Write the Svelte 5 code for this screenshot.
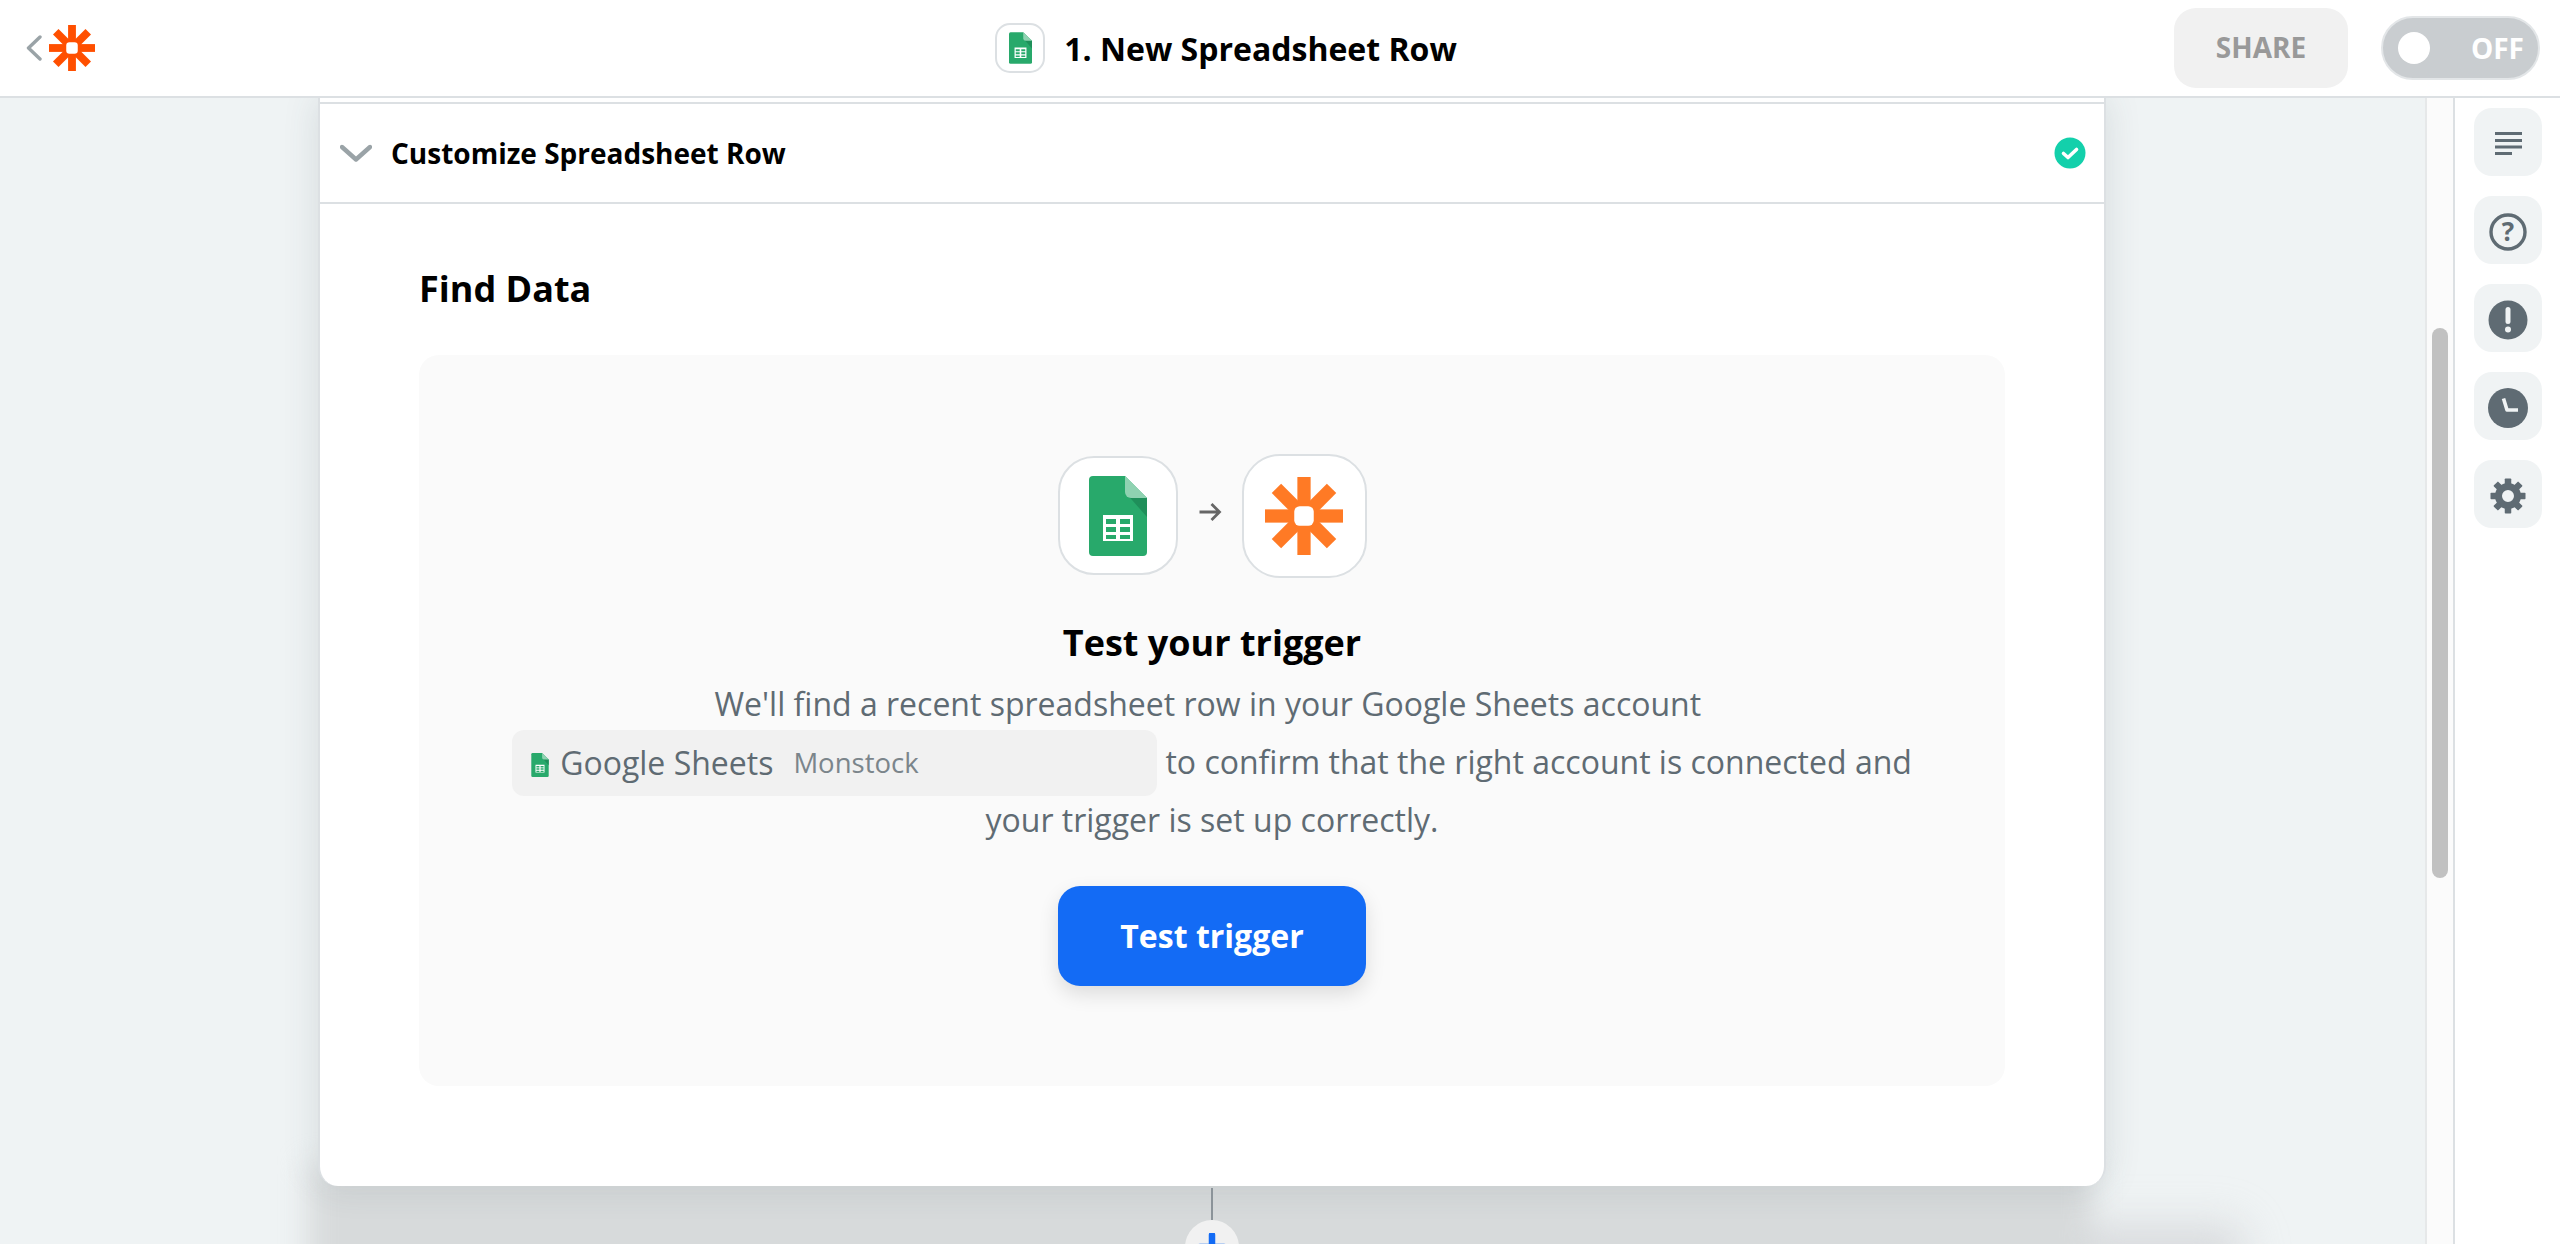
<script>
  const arms = [0, 45, 90, 135];
  const teeth = [0, 45, 90, 135, 180, 225, 270, 315];
</script>

{#snippet zap(color, cls)}
  <svg class={cls} viewBox="-50 -50 100 100" aria-hidden="true">
    {#each arms as a}
      <rect x="-8.5" y="-50" width="17" height="100" fill={color} transform="rotate({a})" />
    {/each}
    <circle r="18" fill={color} />
    <rect x="-12.5" y="-12.5" width="25" height="25" rx="7" fill="#fff" />
  </svg>
{/snippet}

{#snippet sheet(cls)}
  <svg class={cls} viewBox="0 0 58 80" aria-hidden="true">
    <path d="M4 0H36L58 22V76a4 4 0 0 1-4 4H4a4 4 0 0 1-4-4V4a4 4 0 0 1 4-4Z" fill="#28a96b" />
    <path d="M36 16L58 41V22L44 20Z" fill="#1f8f5a" />
    <path d="M36 0V16a6 6 0 0 0 6 6H58Z" fill="#8fd2b1" />
    <path fill-rule="evenodd" fill="#fff" d="M14 39H44V65H14ZM17 43V48H27V43ZM31 43V48H41V43ZM17 51V56H27V51ZM31 51V56H41V51ZM17 59V63H27V59ZM31 59V63H41V59Z" />
  </svg>
{/snippet}

<div class="app">
  <header class="topbar">
    <div class="brand">
      <svg class="back" viewBox="0 0 16 26" aria-hidden="true"><path d="M14 2L2.5 13L14 24" fill="none" stroke="#9aa3a7" stroke-width="3.4" stroke-linecap="round" stroke-linejoin="round" /></svg>
      {@render zap('#ff4f00', 'logo')}
    </div>
    <div class="title">
      <span class="title-icon">{@render sheet('sheet-sm')}</span>
      <span>1. New Spreadsheet Row</span>
    </div>
    <div class="actions">
      <button class="share">SHARE</button>
      <div class="toggle"><span class="knob"></span><span>OFF</span></div>
    </div>
  </header>

  <div class="main">
    <div class="canvas">
      <div class="after-shadow"></div>
      <section class="card">
        <div class="card-head">
          <svg class="chev" viewBox="0 0 32 18" aria-hidden="true"><path d="M2 3L16 15.5L30 3" fill="none" stroke="#9aa3a7" stroke-width="4.4" stroke-linecap="round" stroke-linejoin="round" /></svg>
          <span class="head-label">Customize Spreadsheet Row</span>
          <svg class="ok" viewBox="0 0 32 32" aria-hidden="true"><circle cx="16" cy="16" r="15.5" fill="#13d0ab" /><path d="M9.5 16.5L14 20.5L22.5 12.5" fill="none" stroke="#fff" stroke-width="3.6" stroke-linecap="round" stroke-linejoin="round" /></svg>
        </div>
        <div class="card-body">
          <h2>Find Data</h2>
          <div class="panel">
            <div class="flow">
              <div class="app-box small">{@render sheet('sheet-lg')}</div>
              <svg class="arrow" viewBox="0 0 24 20" aria-hidden="true"><path d="M1.5 10H21.5M13.5 2L21.5 10L13.5 18" fill="none" stroke="#666" stroke-width="2.8" /></svg>
              <div class="app-box big">{@render zap('#ff7a25', 'zap-lg')}</div>
            </div>
            <h3>Test your trigger</h3>
            <p>We'll find a recent spreadsheet row in your Google Sheets account&nbsp; <span class="chip">{@render sheet('sheet-xs')}<span class="chip-app">Google Sheets</span><span class="chip-acc">Monstock</span></span> to confirm that the right account is connected and your trigger is set up correctly.</p>
            <button class="test">Test trigger</button>
          </div>
        </div>
      </section>
      <div class="connector">
        <span class="line"></span>
        <span class="plus"><svg viewBox="0 0 28 28" aria-hidden="true"><path d="M14 2V26M2 14H26" stroke="#136bf5" stroke-width="6.5" stroke-linecap="round" /></svg></span>
      </div>
    </div>

    <div class="scroll"><div class="thumb"></div></div>

    <aside class="side">
      <button class="tool" aria-label="Details">
        <svg viewBox="0 0 28 24"><path d="M1 1.5H28M1 8.5H28M1 15H28M1 21.5H18" stroke="#5f6b73" stroke-width="3" /></svg>
      </button>
      <button class="tool" aria-label="Help">
        <svg viewBox="0 0 40 40"><circle cx="20" cy="20" r="17" fill="none" stroke="#5f6b73" stroke-width="3.4" /><text x="20" y="29" text-anchor="middle" class="q">?</text></svg>
      </button>
      <button class="tool" aria-label="Alerts">
        <svg viewBox="0 0 40 40"><circle cx="20" cy="20" r="19.5" fill="#5f6b73" /><rect x="17.5" y="7" width="5" height="17" rx="2.5" fill="#f0f3f4" /><circle cx="20" cy="29.5" r="3" fill="#f0f3f4" /></svg>
      </button>
      <button class="tool" aria-label="History">
        <svg viewBox="0 0 40 40"><circle cx="20" cy="20" r="20" fill="#5f6b73" /><path d="M15.5 10.5L19 22H30" fill="none" stroke="#f0f3f4" stroke-width="3.6" stroke-linejoin="round" /></svg>
      </button>
      <button class="tool" aria-label="Settings">
        <svg viewBox="0 0 36 36">
          <circle cx="18" cy="18" r="9.5" fill="none" stroke="#5f6b73" stroke-width="7" />
          {#each teeth as t}
            <rect x="14.75" y="0.5" width="6.5" height="6" rx="0.8" fill="#5f6b73" transform="rotate({t} 18 18)" />
          {/each}
        </svg>
      </button>
    </aside>
  </div>
</div>

<style>
  :global(body) { margin: 0; }
  .app {
    width: 2560px; height: 1244px; display: flex; flex-direction: column; overflow: hidden;
    font-family: "Open Sans", "Noto Sans", sans-serif; background: #fff;
  }
  .topbar {
    height: 96px; flex: none; display: grid; grid-template-columns: 1fr auto 1fr; align-items: center;
    border-bottom: 2px solid #dce0e3; background: #fff;
  }
  .brand { display: flex; align-items: center; gap: 7px; padding-left: 26px; }
  .back { width: 16px; height: 26px; display: block; }
  .logo { width: 46px; height: 46px; display: block; }
  .title { display: flex; align-items: center; gap: 19px; font-size: 32px; font-weight: 700; color: #000; margin-right: 108px; }
  .title-icon {
    width: 50px; height: 50px; box-sizing: border-box; border: 2px solid #dce0e3; border-radius: 15px;
    display: flex; align-items: center; justify-content: center;
  }
  .sheet-sm { width: 23px; height: 32px; display: block; }
  .actions { display: flex; justify-content: flex-end; align-items: center; gap: 33px; padding-right: 20px; }
  .share {
    width: 174px; height: 80px; border: 0; border-radius: 22px; background: #f1f1f1; color: #999;
    font: 700 28px "Open Sans", sans-serif; padding: 0 0 2px;
  }
  .toggle {
    width: 159px; height: 64px; box-sizing: border-box; border: 2px solid #e3e6e8; border-radius: 32px;
    background: #c9cdd0; color: #fff; font-weight: 700; font-size: 28px;
    display: flex; align-items: center; justify-content: space-between; padding: 0 14px 0 15px;
  }
  .knob { width: 32px; height: 32px; border-radius: 50%; background: #fff; }

  .main { flex: 1; min-height: 0; display: flex; }
  .canvas { flex: 1; min-width: 0; background: #eff3f4; position: relative; overflow: hidden; }
  .after-shadow {
    position: absolute; left: 308px; right: 333px; top: 1067px; height: 240px; background: #d7dadb;
    filter: blur(14px);
    box-shadow: 150px 60px 30px rgba(190, 190, 195, .45);
  }
  .card {
    position: relative; width: 1788px; height: 1088px; margin: 0 0 0 318px; box-sizing: border-box;
    background: #fff; border: 2px solid #dce0e3; border-top: 0; border-bottom: 0; border-radius: 0 0 20px 20px;
    box-shadow: 0 0 36px rgba(60, 75, 85, .14); padding-top: 4px;
  }
  .card-head {
    height: 98px; border-top: 2px solid #dce0e3; border-bottom: 2px solid #dce0e3;
    display: flex; align-items: center; padding: 0 18px 0 20px; gap: 19px;
  }
  .chev { width: 32px; height: 18px; display: block; }
  .head-label { flex: 1; font-size: 28px; font-weight: 700; color: #000; }
  .ok { width: 32px; height: 32px; display: block; }
  .card-body { padding: 60px 99px 0 99px; }
  h2 { margin: 0 0 41px; font-size: 36px; line-height: 50px; font-weight: 700; color: #000; }
  .panel {
    height: 731px; box-sizing: border-box; background: #fafafa; border-radius: 20px; padding-top: 99px;
    display: flex; flex-direction: column; align-items: center;
  }
  .flow { display: flex; align-items: center; gap: 20px; height: 123px; }
  .app-box { background: #fff; box-sizing: border-box; border: 2px solid #dce0e3; display: flex; align-items: center; justify-content: center; }
  .small { width: 120px; height: 119px; border-radius: 36px; }
  .big { width: 125px; height: 124px; border-radius: 38px; }
  .sheet-lg { width: 58px; height: 80px; display: block; }
  .zap-lg { width: 78px; height: 78px; display: block; }
  .arrow { width: 24px; height: 20px; display: block; margin-top: -7px; }
  h3 { margin: 41px 0 0; font-size: 36px; line-height: 50px; font-weight: 700; color: #000; }
  p { margin: 7px 0 0; width: 1440px; text-align: center; font-size: 32px; line-height: 58px; color: #5f6b73; }
  .chip {
    display: inline-flex; align-items: center; vertical-align: middle; width: 645px; height: 66px; box-sizing: border-box;
    margin: -12px 0 -8px; padding-left: 19px; background: #f1f1f1; border-radius: 12px; text-align: left;
  }
  .sheet-xs { width: 18px; height: 24px; display: block; margin-right: 11px; margin-top: 4px; }
  .chip-acc { margin-left: 20px; font-size: 27.5px; color: #7b858b; }
  .test {
    margin-top: 37px; width: 308px; height: 100px; border: 0; border-radius: 22px; background: #136bf5; color: #fff;
    font: 700 32px "Open Sans", sans-serif; box-shadow: 0 8px 20px rgba(0, 0, 0, .12); padding: 0 0 2px;
  }
  .connector { position: absolute; left: 1185px; top: 1090px; width: 54px; display: flex; flex-direction: column; align-items: center; }
  .line { width: 2px; height: 32px; background: #8b9399; }
  .plus { width: 54px; height: 54px; border-radius: 50%; background: #f1f1f1; display: flex; align-items: center; justify-content: center; }
  .plus svg { width: 28px; height: 28px; }

  .scroll {
    width: 30px; flex: none; box-sizing: border-box; background: #fbfbfb;
    border-left: 2px solid #e6e8e9; border-right: 2px solid #dce0e3; padding: 230px 5px 0 5px;
  }
  .thumb { width: 16px; height: 550px; border-radius: 8px; background: #c1c1c1; }
  .side { width: 105px; flex: none; display: flex; flex-direction: column; align-items: center; gap: 20px; padding: 10px 0 0; box-sizing: border-box; background: #fff; }
  .tool {
    width: 68px; height: 68px; flex: none; border: 0; padding: 3px 0 0; border-radius: 18px; background: #f0f3f4;
    display: flex; align-items: center; justify-content: center;
  }
  .tool svg { display: block; width: 40px; height: 40px; }
  .tool:first-child svg { width: 28px; height: 24px; }
  .tool:last-child svg { width: 36px; height: 36px; }
  .q { font: 700 26px "Open Sans", sans-serif; fill: #5f6b73; }
</style>
